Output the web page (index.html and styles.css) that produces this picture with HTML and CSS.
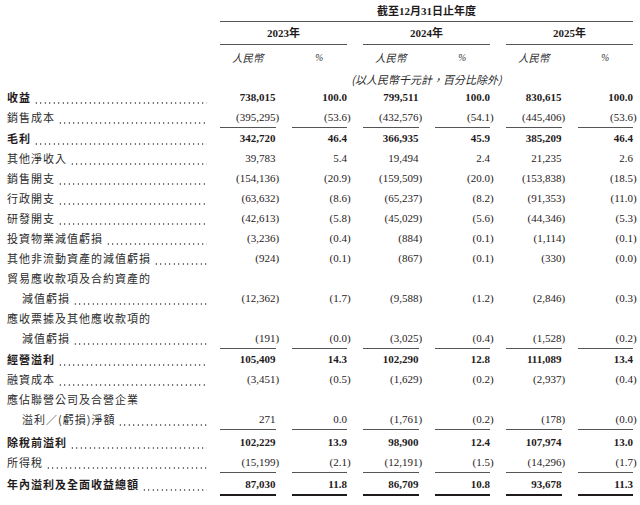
FILE: index.html
```html
<!DOCTYPE html>
<html lang="zh-Hant">
<head>
<meta charset="utf-8">
<title>損益表</title>
<link rel="stylesheet" href="styles.css">
</head>
<body>
<div class="stmt">
  <div class="row h1"><div></div><div class="period">截至12月31日止年度</div></div>
  <div class="row h2"><div></div><div class="yr">2023年</div><div class="yr">2024年</div><div class="yr">2025年</div></div>
  <div class="row h3"><div></div><div class="cur">人民幣</div><div class="pct">%</div><div class="cur">人民幣</div><div class="pct">%</div><div class="cur">人民幣</div><div class="pct">%</div></div>
  <div class="row h4"><div></div><div class="note">(以人民幣千元計，百分比除外)</div></div>

  <div class="row b"><div class="lab"><span class="t">收益</span><span class="dots"></span></div><div class="c">738,015</div><div class="c">100.0</div><div class="c">799,511</div><div class="c">100.0</div><div class="c">830,615</div><div class="c">100.0</div></div>
  <div class="row u"><div class="lab"><span class="t">銷售成本</span><span class="dots"></span></div><div class="c"><span class="n">(395,295)</span></div><div class="c"><span class="n">(53.6)</span></div><div class="c"><span class="n">(432,576)</span></div><div class="c"><span class="n">(54.1)</span></div><div class="c"><span class="n">(445,406)</span></div><div class="c"><span class="n">(53.6)</span></div></div>
  <div class="row b"><div class="lab"><span class="t">毛利</span><span class="dots"></span></div><div class="c">342,720</div><div class="c">46.4</div><div class="c">366,935</div><div class="c">45.9</div><div class="c">385,209</div><div class="c">46.4</div></div>
  <div class="row"><div class="lab"><span class="t">其他淨收入</span><span class="dots"></span></div><div class="c">39,783</div><div class="c">5.4</div><div class="c">19,494</div><div class="c">2.4</div><div class="c">21,235</div><div class="c">2.6</div></div>
  <div class="row"><div class="lab"><span class="t">銷售開支</span><span class="dots"></span></div><div class="c"><span class="n">(154,136)</span></div><div class="c"><span class="n">(20.9)</span></div><div class="c"><span class="n">(159,509)</span></div><div class="c"><span class="n">(20.0)</span></div><div class="c"><span class="n">(153,838)</span></div><div class="c"><span class="n">(18.5)</span></div></div>
  <div class="row"><div class="lab"><span class="t">行政開支</span><span class="dots"></span></div><div class="c"><span class="n">(63,632)</span></div><div class="c"><span class="n">(8.6)</span></div><div class="c"><span class="n">(65,237)</span></div><div class="c"><span class="n">(8.2)</span></div><div class="c"><span class="n">(91,353)</span></div><div class="c"><span class="n">(11.0)</span></div></div>
  <div class="row"><div class="lab"><span class="t">研發開支</span><span class="dots"></span></div><div class="c"><span class="n">(42,613)</span></div><div class="c"><span class="n">(5.8)</span></div><div class="c"><span class="n">(45,029)</span></div><div class="c"><span class="n">(5.6)</span></div><div class="c"><span class="n">(44,346)</span></div><div class="c"><span class="n">(5.3)</span></div></div>
  <div class="row"><div class="lab"><span class="t">投資物業減值虧損</span><span class="dots"></span></div><div class="c"><span class="n">(3,236)</span></div><div class="c"><span class="n">(0.4)</span></div><div class="c"><span class="n">(884)</span></div><div class="c"><span class="n">(0.1)</span></div><div class="c"><span class="n">(1,114)</span></div><div class="c"><span class="n">(0.1)</span></div></div>
  <div class="row"><div class="lab"><span class="t">其他非流動資產的減值虧損</span><span class="dots"></span></div><div class="c"><span class="n">(924)</span></div><div class="c"><span class="n">(0.1)</span></div><div class="c"><span class="n">(867)</span></div><div class="c"><span class="n">(0.1)</span></div><div class="c"><span class="n">(330)</span></div><div class="c"><span class="n">(0.0)</span></div></div>
  <div class="row"><div class="lab"><span class="t">貿易應收款項及合約資產的</span></div></div>
  <div class="row"><div class="lab ind"><span class="t">減值虧損</span><span class="dots"></span></div><div class="c"><span class="n">(12,362)</span></div><div class="c"><span class="n">(1.7)</span></div><div class="c"><span class="n">(9,588)</span></div><div class="c"><span class="n">(1.2)</span></div><div class="c"><span class="n">(2,846)</span></div><div class="c"><span class="n">(0.3)</span></div></div>
  <div class="row"><div class="lab"><span class="t">應收票據及其他應收款項的</span></div></div>
  <div class="row u"><div class="lab ind"><span class="t">減值虧損</span><span class="dots"></span></div><div class="c"><span class="n">(191)</span></div><div class="c"><span class="n">(0.0)</span></div><div class="c"><span class="n">(3,025)</span></div><div class="c"><span class="n">(0.4)</span></div><div class="c"><span class="n">(1,528)</span></div><div class="c"><span class="n">(0.2)</span></div></div>
  <div class="row b"><div class="lab"><span class="t">經營溢利</span><span class="dots"></span></div><div class="c">105,409</div><div class="c">14.3</div><div class="c">102,290</div><div class="c">12.8</div><div class="c">111,089</div><div class="c">13.4</div></div>
  <div class="row"><div class="lab"><span class="t">融資成本</span><span class="dots"></span></div><div class="c"><span class="n">(3,451)</span></div><div class="c"><span class="n">(0.5)</span></div><div class="c"><span class="n">(1,629)</span></div><div class="c"><span class="n">(0.2)</span></div><div class="c"><span class="n">(2,937)</span></div><div class="c"><span class="n">(0.4)</span></div></div>
  <div class="row"><div class="lab"><span class="t">應佔聯營公司及合營企業</span></div></div>
  <div class="row u"><div class="lab ind"><span class="t">溢利／(虧損)淨額</span><span class="dots"></span></div><div class="c">271</div><div class="c">0.0</div><div class="c"><span class="n">(1,761)</span></div><div class="c"><span class="n">(0.2)</span></div><div class="c"><span class="n">(178)</span></div><div class="c"><span class="n">(0.0)</span></div></div>
  <div class="row b gap2"><div class="lab"><span class="t">除稅前溢利</span><span class="dots"></span></div><div class="c">102,229</div><div class="c">13.9</div><div class="c">98,900</div><div class="c">12.4</div><div class="c">107,974</div><div class="c">13.0</div></div>
  <div class="row u"><div class="lab"><span class="t">所得稅</span><span class="dots"></span></div><div class="c"><span class="n">(15,199)</span></div><div class="c"><span class="n">(2.1)</span></div><div class="c"><span class="n">(12,191)</span></div><div class="c"><span class="n">(1.5)</span></div><div class="c"><span class="n">(14,296)</span></div><div class="c"><span class="n">(1.7)</span></div></div>
  <div class="row b dbl gap1"><div class="lab"><span class="t">年內溢利及全面收益總額</span><span class="dots"></span></div><div class="c">87,030</div><div class="c">11.8</div><div class="c">86,709</div><div class="c">10.8</div><div class="c">93,678</div><div class="c">11.3</div></div>
</div>
</body>
</html>
```
FILE: styles.css
```css
html, body {
  margin: 0;
  background: #ffffff;
}
body {
  color: #1f1b1c;
  font-family: "Liberation Serif", "Noto Sans CJK TC", serif;
  font-size: 11px;
}
.stmt {
  padding-left: 7px;
  width: 626px;
}
.row {
  display: grid;
  grid-template-columns: 197px repeat(6, 55.5px);
  column-gap: 16px;
  line-height: 20px;
}
.h1 .period {
  grid-column: 2 / 8;
  text-align: center;
  font-weight: 700;
  padding-top: 1px;
  line-height: 20px;
  border-bottom: 1px solid #555;
}
.h2 .yr {
  grid-column: span 2;
  text-align: center;
  font-weight: 700;
  line-height: 22px;
  border-bottom: 1px solid #555;
}
.h3 {
  line-height: 26px;
}
.h3 .cur {
  text-align: center;
  font-style: italic;
  font-size: 10.5px;
  font-family: "Noto Sans CJK TC", sans-serif;
  color: #2b2b2b;
}
.h3 .pct {
  text-align: center;
  font-style: italic;
  font-size: 9.5px;
  color: #333;
}
.h4 {
  line-height: 16px;
}
.h4 .note {
  grid-column: 2 / 8;
  text-align: center;
  font-style: italic;
  font-family: "Noto Sans CJK TC", sans-serif;
  font-size: 11px;
  color: #2b2b2b;
}
.lab {
  display: flex;
  margin-right: -3px;
  font-family: "Noto Sans CJK TC", sans-serif;
  letter-spacing: 1px;
  white-space: nowrap;
  color: #2b2b2b;
}
.lab.ind {
  padding-left: 15px;
}
.lab .dots {
  flex: 1;
  margin-left: 3px;
  background-image: radial-gradient(circle, #444 0.7px, transparent 1px);
  background-size: 4.5px 2px;
  background-repeat: repeat-x;
  background-position: 0 14.5px;
}
.c {
  text-align: right;
  white-space: nowrap;
}
.n {
  margin-right: -0.333em;
}
.b .lab {
  font-weight: 700;
  color: #1f1b1c;
}
.b .c {
  font-weight: 700;
}
.u .c {
  border-bottom: 1px solid #555;
}
.dbl .c {
  border-bottom: 2px solid #1f1b1c;
  box-shadow: 0 2px 0 0 #ffffff, 0 3px 0 0 #1f1b1c;
}
.gap2 {
  margin-top: 2px;
}
.gap1 {
  margin-top: 1px;
}
```
